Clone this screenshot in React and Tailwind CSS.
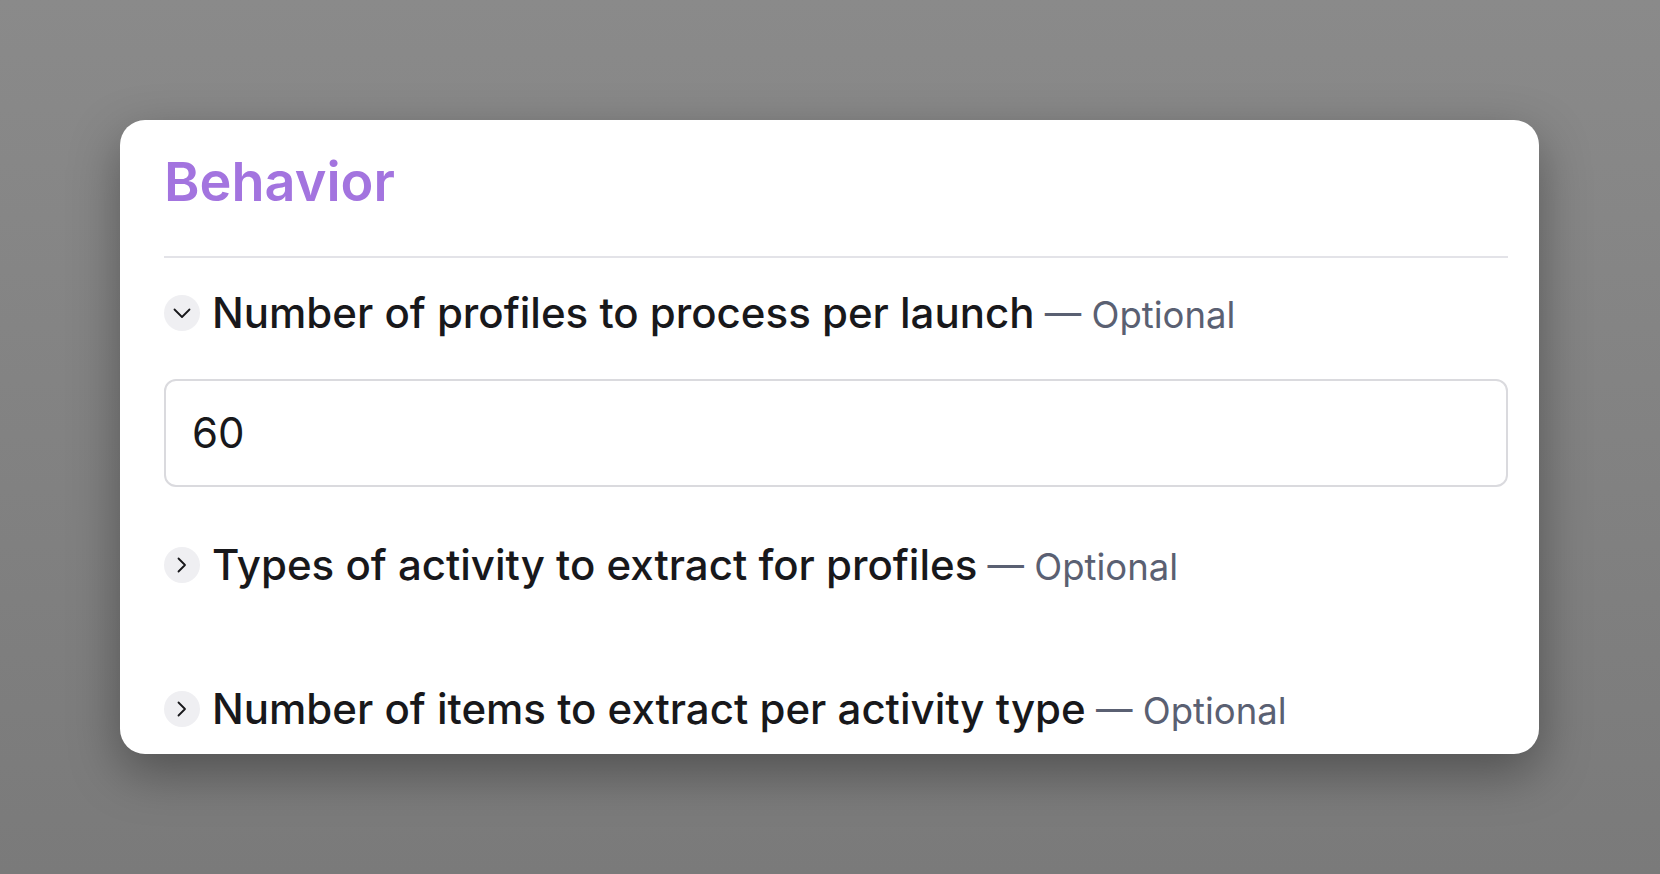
const fields = [
  { label: "Number of profiles to process per launch", open: true, value: "60" },
  { label: "Types of activity to extract for profiles", open: false },
  { label: "Number of items to extract per activity type", open: false },
];

function Chevron({ open }) {
  return (
    <svg width="18" height="18" viewBox="0 0 18 18" fill="none" stroke="#18181b" strokeWidth="1.8" strokeLinecap="round" strokeLinejoin="round">
      {open ? <path d="M1.5 5.5 9 13l7.5-7.5" /> : <path d="M5.5 2.5 12 9l-6.5 6.5" />}
    </svg>
  );
}

function FieldHeader({ label, open }) {
  return (
    <div className="flex items-center gap-3">
      <div className="w-9 h-9 rounded-full bg-[#efeff2] flex items-center justify-center shrink-0">
        <Chevron open={open} />
      </div>
      <div className="whitespace-nowrap text-[42px] leading-[42px] h-[42px]">
        <span className="font-medium text-[#18181b]">{label}</span>
        <span className="text-[36.5px] text-[#5a6072]"> — Optional</span>
      </div>
    </div>
  );
}

export default function App() {
  return (
    <div
      className="min-h-screen w-full bg-gradient-to-b from-[#8a8a8a] to-[#7a7a7a] pl-[120px] pt-[120px]"
      style={{ fontFamily: "Inter, 'Noto Sans', sans-serif" }}
    >
      <div className="w-[1419px] h-[634px] bg-white rounded-[25px] overflow-hidden shadow-[0_18px_50px_rgba(0,0,0,0.35)] pl-[44px] pr-[31px] pt-[34px]">
        <h2 className="text-[54px] leading-[56px] font-semibold text-[#a374df]">Behavior</h2>

        <div className="mt-[46px] h-[2px] bg-[#e3e3e8]" />

        <div className="mt-[34px]">
          <FieldHeader label={fields[0].label} open />
        </div>

        <div className="mt-[45px] h-[108px] rounded-[12px] border-2 border-[#dadade] px-[26px] flex items-center">
          <span className="text-[42px] text-[#18181b] leading-[42px]">{fields[0].value}</span>
        </div>

        <div className="mt-[57px]">
          <FieldHeader label={fields[1].label} />
        </div>

        <div className="mt-[102px]">
          <FieldHeader label={fields[2].label} />
        </div>
      </div>
    </div>
  );
}
